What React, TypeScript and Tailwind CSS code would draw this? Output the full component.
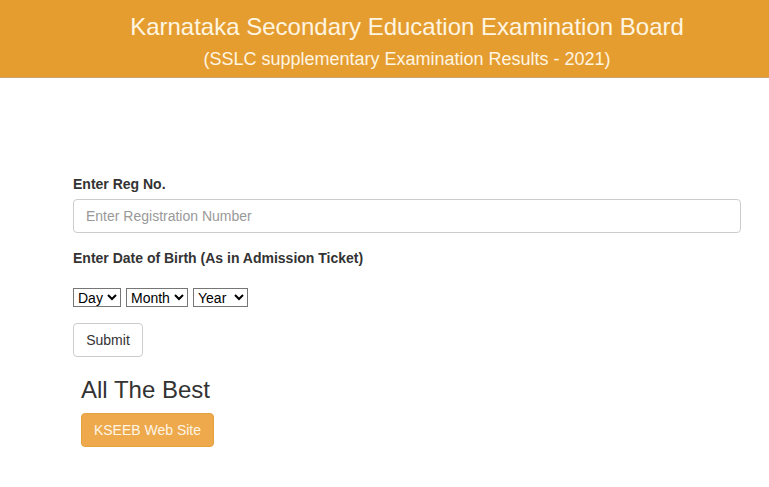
export default function App() {
  return (
    <div className="min-h-[487px] bg-white font-['Liberation_Sans',Arial,sans-serif] text-[#333]">
      <header className="flex h-[78px] flex-col items-center border-b border-[#c9a56a] bg-[#e59d30] pl-[45px] text-[#fff5e0]">
        <h1 className="mt-[11px] text-[24px] leading-[32px]">Karnataka Secondary Education Examination Board</h1>
        <p className="mt-[4px] text-[18px] leading-[24px]">(SSLC supplementary Examination Results - 2021)</p>
      </header>

      <form className="flex flex-col px-[73px] pt-[96px]" onSubmit={(e) => e.preventDefault()}>
        <label className="text-[14px] font-bold leading-[20px]">Enter Reg No.</label>
        <input
          type="text"
          placeholder="Enter Registration Number"
          className="mt-[5px] h-[34px] w-[668px] rounded-[4px] border border-[#ccc] px-[12px] text-[14px] text-[#555] placeholder:text-[#999] outline-none"
        />
        <label className="mt-[15px] text-[14px] font-bold leading-[20px]">Enter Date of Birth (As in Admission Ticket)</label>

        <div className="mt-[20px] flex gap-[5px]">
          <select className="h-[19px] w-[48px] border border-[#767676] bg-white text-[14px] leading-[17px] text-black">
            <option>Day</option>
          </select>
          <select className="h-[19px] w-[62px] border border-[#767676] bg-white text-[14px] leading-[17px] text-black">
            <option>Month</option>
          </select>
          <select className="h-[19px] w-[55px] border border-[#767676] bg-white text-[14px] leading-[17px] text-black">
            <option>Year</option>
          </select>
        </div>

        <div className="mt-[16px]">
          <button type="submit" className="h-[34px] w-[70px] rounded-[4px] border border-[#ccc] bg-white text-[14px] text-[#333]">
            Submit
          </button>
        </div>

        <div className="ml-[8px] flex flex-col items-start">
          <h3 className="mt-[20px] text-[24px] leading-[26px]">All The Best</h3>
          <a className="mt-[10px] flex h-[34px] w-[133px] items-center justify-center rounded-[4px] border border-[#e6a13f] bg-[#eda94c] text-[14px] text-[#fff5e6]">
            KSEEB Web Site
          </a>
        </div>
      </form>
    </div>
  )
}
